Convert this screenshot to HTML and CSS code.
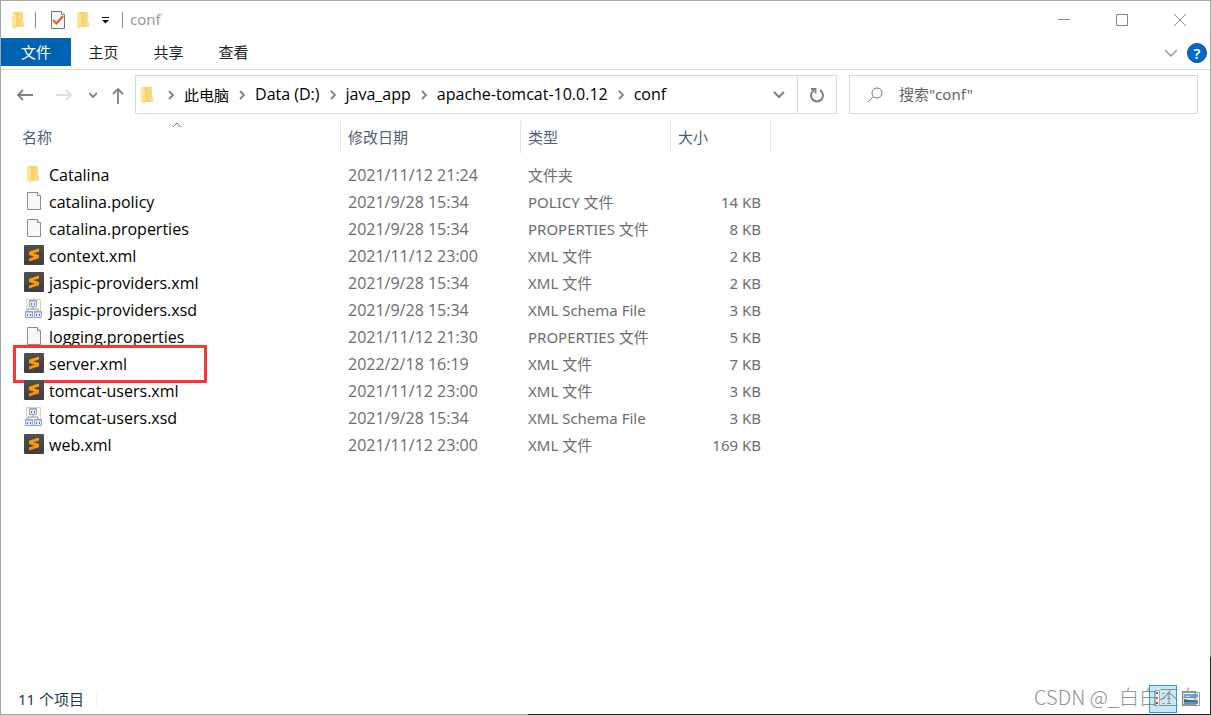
FILE: index.html
```html
<!DOCTYPE html>
<html lang="zh-CN">
<head>
<meta charset="utf-8">
<title>conf</title>
<link rel="stylesheet" href="styles.css">
</head>
<body>
<svg class="sprite" aria-hidden="true">
  <defs>
    <linearGradient id="gold" x1="0" y1="0" x2="1" y2="0"><stop offset="0" stop-color="#f3cc63"/><stop offset="1" stop-color="#fbdf86"/></linearGradient>
    <linearGradient id="gold-front" x1="0" y1="0" x2="0" y2="1"><stop offset="0" stop-color="#ffe9a6"/><stop offset="1" stop-color="#fddf8d"/></linearGradient>
    <linearGradient id="dark" x1="0" y1="0" x2="0" y2="1"><stop offset="0" stop-color="#505050"/><stop offset="1" stop-color="#3f3f3f"/></linearGradient>
    <linearGradient id="orange" x1="0" y1="0" x2="0" y2="1"><stop offset="0" stop-color="#ffa000"/><stop offset="1" stop-color="#ff9208"/></linearGradient>
  </defs>
  <symbol id="folder" viewBox="0 0 20 20">
    <path d="M5 2h9v9l1 1v5H5z" fill="url(#gold)"/>
    <path d="M3 2h1l3 3v13l-1 1-3-2z" fill="url(#gold-front)"/>
  </symbol>
  <symbol id="page" viewBox="0 0 20 20">
    <path d="M3.500 1.500h10l3 3v14h-13z" fill="#f7f8f8" stroke="#8c8c8c"/>
    <path d="M13.500 1.500v3h3" fill="#fff" stroke="#8c8c8c"/>
  </symbol>
  <symbol id="sublime" viewBox="0 0 20 20">
    <rect width="20" height="20" rx="1" fill="url(#dark)"/>
    <path d="M15 3.500v3L9.500 8.200 15 10v3.200L5 16.500v-3L10.500 11.700 5 10V6.700z" fill="url(#orange)"/>
  </symbol>
  <symbol id="schema" viewBox="0 0 20 20">
    <path d="M2.500.500h14v18h-14z" fill="#fdfbd9" stroke="#d2d4c4"/>
    <path d="M9 7v3M4 13v-3h10v3" fill="none" stroke="#8a97b3"/>
    <path d="M5.500 1.500h7v6h-7zM1.500 12.500h7v6h-7zM10.500 12.500h7v6h-7z" fill="#e2ebff" stroke="#91a5ce"/>
    <path d="M5 2h8M1 13h8M10 13h8" stroke="#8ca3d8"/>
    <path d="M7 5h1m2 0h1M3 16h1m2 0h1m5 0h1m2 0h1" stroke="#5472b5" stroke-width="2"/>
  </symbol>
  <symbol id="chevron" viewBox="0 0 8 10"><path d="M2 1l4 4-4 4" fill="none" stroke="#808080" stroke-width="1.800"/></symbol>
</svg>
<div class="window">
  <header class="titlebar">
    <svg class="icon"><use href="#folder"/></svg>
    <span class="bar bar-first"></span>
    <button class="quick" aria-label="属性"><svg class="icon" viewBox="0 0 20 20"><path d="M3.500 1.500h10l3 3v14h-13z" fill="#f8f8f8" stroke="#777"/><path d="M13.500 1.500v3h3" fill="#fff" stroke="#888"/><path d="M5 10l3.500 3.500L15 6" fill="none" stroke="#f0581e" stroke-width="2"/></svg></button>
    <button class="quick quick-new" aria-label="新建文件夹"><svg class="icon"><use href="#folder"/></svg></button>
    <button class="quick more" aria-label="自定义快速访问工具栏"><svg width="7" height="7" viewBox="0 0 7 7"><path d="M0 .500h7" stroke="#111"/><path d="M0 3h7L3.500 6.500z" fill="#111"/></svg></button>
    <span class="bar"></span>
    <h1>conf</h1>
    <div class="controls">
      <button aria-label="最小化"><svg width="12" height="12"><path d="M0 5.500h12" stroke="#888"/></svg></button>
      <button aria-label="最大化"><svg width="12" height="12"><path d="M.500.500h11v11H.500z" fill="none" stroke="#888"/></svg></button>
      <button aria-label="关闭"><svg width="12" height="12"><path d="M0 0l12 12M12 0L0 12" stroke="#888"/></svg></button>
    </div>
  </header>
  <nav class="tabs">
    <button class="tab active">文件</button>
    <button class="tab">主页</button>
    <button class="tab">共享</button>
    <button class="tab">查看</button>
    <button class="expand" aria-label="展开功能区"><svg width="12" height="8"><path d="M0 1l6 6 6-6" fill="none" stroke="#999" stroke-width="1.500"/></svg></button>
    <button class="help" aria-label="帮助">?</button>
  </nav>
  <div class="navigation">
    <div class="arrows">
      <button aria-label="后退"><svg width="16" height="12"><path d="M16 6H1M6 1L1 6l5 5" fill="none" stroke="#808080" stroke-width="1.800"/></svg></button>
      <button aria-label="前进" disabled><svg width="16" height="12"><path d="M0 6h15M10 1l5 5-5 5" fill="none" stroke="#dedede" stroke-width="1.800"/></svg></button>
      <button class="recent" aria-label="最近浏览的位置"><svg width="8" height="6"><path d="M0 1l4 4 4-4" fill="none" stroke="#808080" stroke-width="1.800"/></svg></button>
      <button class="up" aria-label="上移"><svg width="12" height="16"><path d="M6 16V1M1 6l5-5 5 5" fill="none" stroke="#808080" stroke-width="1.800"/></svg></button>
    </div>
    <div class="address">
      <svg class="icon"><use href="#folder"/></svg>
      <svg class="sep"><use href="#chevron"/></svg><a class="zh" href="#pc">此电脑</a>
      <svg class="sep"><use href="#chevron"/></svg><a href="#d">Data (D:)</a>
      <svg class="sep"><use href="#chevron"/></svg><a href="#java">java_app</a>
      <svg class="sep"><use href="#chevron"/></svg><a href="#tomcat">apache-tomcat-10.0.12</a>
      <svg class="sep"><use href="#chevron"/></svg><a href="#conf">conf</a>
      <button class="history" aria-label="以前的位置"><svg width="12" height="8"><path d="M1 1l5 5 5-5" fill="none" stroke="#808080" stroke-width="2"/></svg></button>
      <button class="refresh" aria-label="刷新"><svg width="16" height="16"><path d="M11 3.200A6 6 0 1 1 5 3.200" fill="none" stroke="#808080" stroke-width="2"/><path d="M2 2h4.500v4.500" fill="none" stroke="#808080" stroke-width="1.800"/></svg></button>
    </div>
    <label class="search">
      <svg width="16" height="16"><circle cx="10" cy="6" r="5" fill="none" stroke="#777"/><path d="M6.500 9.500L1 15" stroke="#777"/></svg>
      <input type="search" aria-label="搜索" placeholder='搜索"conf"'>
    </label>
  </div>
  <main>
    <table>
      <colgroup><col class="c-name"><col class="c-date"><col class="c-type"><col class="c-size"></colgroup>
      <thead><tr><th>名称<svg class="sort" width="10" height="6"><path d="M1 5l4-4 4 4" fill="none" stroke="#777"/></svg></th><th>修改日期</th><th>类型</th><th>大小</th></tr></thead>
      <tbody>
        <tr><td><svg class="icon"><use href="#folder"/></svg>Catalina</td><td>2021/11/12 21:24</td><td>文件夹</td><td></td></tr>
        <tr><td><svg class="icon"><use href="#page"/></svg>catalina.policy</td><td>2021/9/28 15:34</td><td>POLICY 文件</td><td>14 KB</td></tr>
        <tr><td><svg class="icon"><use href="#page"/></svg>catalina.properties</td><td>2021/9/28 15:34</td><td>PROPERTIES 文件</td><td>8 KB</td></tr>
        <tr><td><svg class="icon"><use href="#sublime"/></svg>context.xml</td><td>2021/11/12 23:00</td><td>XML 文件</td><td>2 KB</td></tr>
        <tr><td><svg class="icon"><use href="#sublime"/></svg>jaspic-providers.xml</td><td>2021/9/28 15:34</td><td>XML 文件</td><td>2 KB</td></tr>
        <tr><td><svg class="icon"><use href="#schema"/></svg>jaspic-providers.xsd</td><td>2021/9/28 15:34</td><td>XML Schema File</td><td>3 KB</td></tr>
        <tr><td><svg class="icon"><use href="#page"/></svg>logging.properties</td><td>2021/11/12 21:30</td><td>PROPERTIES 文件</td><td>5 KB</td></tr>
        <tr class="marked"><td><svg class="icon"><use href="#sublime"/></svg>server.xml</td><td>2022/2/18 16:19</td><td>XML 文件</td><td>7 KB</td></tr>
        <tr><td><svg class="icon"><use href="#sublime"/></svg>tomcat-users.xml</td><td>2021/11/12 23:00</td><td>XML 文件</td><td>3 KB</td></tr>
        <tr><td><svg class="icon"><use href="#schema"/></svg>tomcat-users.xsd</td><td>2021/9/28 15:34</td><td>XML Schema File</td><td>3 KB</td></tr>
        <tr><td><svg class="icon"><use href="#sublime"/></svg>web.xml</td><td>2021/11/12 23:00</td><td>XML 文件</td><td>169 KB</td></tr>
      </tbody>
    </table>
  </main>
  <footer>
    <span class="count">11 个项目</span>
    <div class="views">
      <button class="view selected" aria-label="详细信息"><svg width="18" height="18"><path d="M.500.500h5v15h-5z" fill="#fff" stroke="#aaa"/><path d="M2 3h2" stroke="#356eac" stroke-width="2"/><path d="M2 8h2" stroke="#7b8b30" stroke-width="2"/><path d="M2 13h2" stroke="#c3342b" stroke-width="2"/><path d="M8 3.500h3m2 0h4M8 8.500h3m2 0h4M8 13.500h3m2 0h4" stroke="#999"/></svg></button>
      <button class="view" aria-label="大缩略图"><svg width="18" height="16"><path d="M.500 1.500h17v13H.500z" fill="#fff" stroke="#999"/><path d="M2 3h14v10H2z" fill="#6ba5e8"/><path d="M2 6l5-1 3 2 6-1v3H2z" fill="#d9edf5"/><path d="M2 8l5 1 9 1v1H2z" fill="#42665e"/><path d="M2 11h14v2H2z" fill="#5f95cc"/></svg></button>
    </div>
    <span class="watermark">CSDN @_白白丕白</span>
  </footer>
</div>
</body>
</html>
```

FILE: styles.css
```css
*, *::before, *::after { box-sizing: border-box; }
body { margin: 0; font-family: "Noto Sans", "Noto Sans CJK SC", sans-serif; font-size: 15px; line-height: 27px; color: #000; }
button { border: 0; padding: 0; background: none; font: inherit; color: inherit; display: flex; align-items: center; justify-content: center; }
svg { display: block; flex: none; }
.sprite { position: absolute; width: 0; height: 0; }
.icon { width: 20px; height: 20px; }
.window { position: relative; min-height: 100vh; display: flex; flex-direction: column; border: 1px solid #a6a6a6; background: #fff; }
.window::before { content: ""; position: absolute; right: -1px; bottom: -1px; width: 1px; height: 58px; background: #262626; }
.window::after { content: ""; position: absolute; right: -1px; bottom: -1px; width: 56.5%; height: 1px; background: #262626; }

.titlebar { display: flex; align-items: center; height: 37px; padding-left: 8px; }
.bar { width: 1px; height: 16px; background: #8c8c8c; }
.bar-first { margin-left: 6px; }
.quick { margin-left: 12px; }
.quick-new { margin-left: 6px; }
.more { width: 7px; margin: 2px 13px 0 8px; }
h1 { margin: 0 0 0 7px; font-size: 15px; font-weight: 400; color: #999; }
.controls { margin: 0 1px 0 auto; display: flex; }
.controls button { width: 58px; height: 36px; }

.tabs { display: flex; align-items: flex-start; height: 32px; border-bottom: 1px solid #dadbdc; color: #222; }
.tab { width: 65px; height: 28px; line-height: 28px; }
.active { width: 70px; background: #0063b1; color: #fff; }
.expand { margin-left: auto; width: 32px; height: 30px; }
.help { width: 20px; height: 20px; margin: 5px 3px 0 0; border: 1px solid #0a4c92; border-radius: 50%; background: #0069ca; color: #fff; font-weight: 600; line-height: 18px; }

.navigation { display: grid; grid-template-columns: 134px minmax(0, 702fr) minmax(0, 361fr); height: 49px; padding: 5px 12px 5px 0; }
.arrows { display: flex; padding-left: 16px; }
.arrows button { width: 16px; margin-right: 23px; }
.arrows .recent { width: 8px; margin: 0 15px 0 -6px; }
.arrows .up { width: 12px; margin: 2px 0 0; }
.address { display: flex; align-items: center; border: 1px solid #d9d9d9; padding-left: 2px; }
.address a { font-family: "Open Sans", sans-serif; font-size: 16px; color: #000; text-decoration: none; white-space: nowrap; }
.address .zh { font-family: "Noto Sans CJK SC", sans-serif; font-size: 15px; }
.sep { width: 8px; height: 10px; margin: 0 9px; }
.history { margin-left: auto; width: 37px; height: 37px; }
.refresh { width: 39px; height: 37px; border-left: 1px solid #d9d9d9; }
.search { display: flex; align-items: center; gap: 16px; margin-left: 12px; padding-left: 17px; border: 1px solid #d9d9d9; }
.search input { flex: 1; min-width: 0; border: 0; padding: 0; font: inherit; outline: 0; }
.search input::placeholder { color: #666; opacity: 1; }

main { flex: 1; padding-top: 2px; }
table { table-layout: fixed; width: 770px; border-collapse: separate; border-spacing: 0; color: #6d6d6d; }
.c-name { width: 340px; }
.c-date { width: 180px; }
.c-type { width: 150px; }
.c-size { width: 100px; }
th { position: relative; height: 32px; padding: 0 0 0 7px; border-right: 1px solid #e5e5e5; text-align: left; font-weight: 400; color: #4c607a; }
th:first-child { padding-left: 21px; }
.sort { position: absolute; top: 1px; left: 171px; }
tbody::before { content: ""; display: table-row; height: 9px; }
td { height: 27px; padding: 0 0 0 7px; white-space: nowrap; }
td:first-child { position: relative; display: flex; align-items: center; gap: 5px; padding-left: 23px; color: #000; }
td:first-child, td:nth-child(2) { font-family: "Open Sans", sans-serif; font-size: 16px; }
td .icon { margin-bottom: 4px; }
td:last-child { padding: 0 10px 0 0; text-align: right; }
.marked td:first-child::after { content: ""; position: absolute; top: -6px; left: 12px; width: 194px; height: 38px; border: 3px solid #fc3532; }

footer { position: relative; display: flex; align-items: center; height: 30px; padding: 0 5px 0 17px; color: #1e395b; }
.count { padding-right: 12px; border-right: 1px solid #f3f3f3; line-height: 16px; }
.views { display: flex; margin-left: auto; }
.view { width: 28px; height: 28px; }
.selected { border: 1px solid #26a0da; background: #cbe8f6; }
.watermark { position: absolute; right: 11px; bottom: 3px; font: 20px/28px "Noto Sans CJK SC", sans-serif; font-weight: 300; color: #777; opacity: .8; pointer-events: none; }
```
